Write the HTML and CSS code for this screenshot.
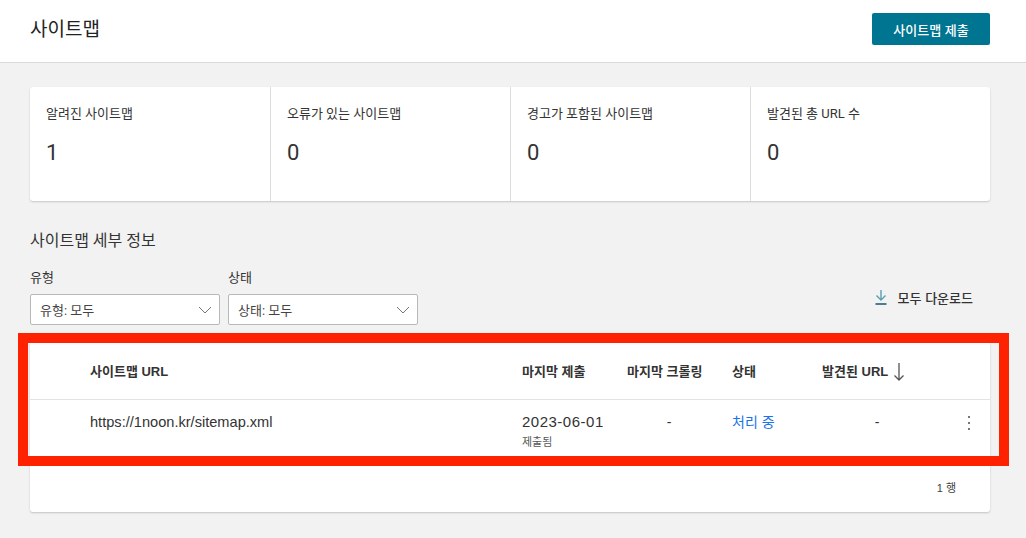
FILE: index.html
```html
<!DOCTYPE html>
<html lang="ko">
<head>
<meta charset="utf-8">
<title>사이트맵</title>
<link rel="stylesheet" href="styles.css">
</head>
<body>
<header class="topbar">
  <h1 class="page-title">사이트맵</h1>
  <button class="btn-primary">사이트맵 제출</button>
</header>

<main class="content">
  <section class="summary">
    <div class="stat"><div class="stat-label">알려진 사이트맵</div><div class="stat-value">1</div></div>
    <div class="stat"><div class="stat-label">오류가 있는 사이트맵</div><div class="stat-value">0</div></div>
    <div class="stat"><div class="stat-label">경고가 포함된 사이트맵</div><div class="stat-value">0</div></div>
    <div class="stat"><div class="stat-label">발견된 총 URL 수</div><div class="stat-value">0</div></div>
  </section>

  <h2 class="section-title">사이트맵 세부 정보</h2>

  <div class="filters">
    <div class="filter">
      <label class="filter-label">유형</label>
      <div class="select"><span>유형: 모두</span>
        <svg class="chev" width="14" height="8" viewBox="0 0 14 8"><path d="M1 1l6 6 6-6" fill="none" stroke="#757575" stroke-width="1"/></svg>
      </div>
    </div>
    <div class="filter">
      <label class="filter-label">상태</label>
      <div class="select"><span>상태: 모두</span>
        <svg class="chev" width="14" height="8" viewBox="0 0 14 8"><path d="M1 1l6 6 6-6" fill="none" stroke="#757575" stroke-width="1"/></svg>
      </div>
    </div>
    <div class="download">
      <svg width="12" height="16" viewBox="0 0 12 16"><path d="M6 1v10M1.5 6.5L6 11l4.5-4.5" fill="none" stroke="#5a9fb3" stroke-width="1.4"/><path d="M0.5 15h11" stroke="#1f5f73" stroke-width="1.6"/></svg>
      <span>모두 다운로드</span>
    </div>
  </div>

  <section class="table-card">
    <div class="trow thead">
      <div>사이트맵 URL</div>
      <div>마지막 제출</div>
      <div>마지막 크롤링</div>
      <div>상태</div>
      <div class="sorted">발견된 URL
        <svg class="arrow" width="12" height="20" viewBox="0 0 12 20"><path d="M6 1v17M1.5 13.5L6 18l4.5-4.5" fill="none" stroke="#555" stroke-width="1.3"/></svg>
      </div>
      <div></div>
    </div>
    <div class="trow tbody">
      <div class="url">https://1noon.kr/sitemap.xml</div>
      <div class="date">2023-06-01<small>제출됨</small></div>
      <div class="center c3">-</div>
      <div class="status">처리 중</div>
      <div class="center">-</div>
      <div class="kebab"><i></i><i></i><i></i></div>
    </div>
    <div class="tfoot">1 행</div>
  </section>
</main>

<div class="highlight"></div>
</body>
</html>
```

FILE: styles.css
```css
* { box-sizing: border-box; }
html, body { margin: 0; padding: 0; }
body {
  background: #f2f2f2;
  font-family: Roboto, "Noto Sans CJK KR", sans-serif;
  color: #333;
  width: 1026px;
  height: 538px;
  overflow: hidden;
  position: relative;
}
.topbar {
  height: 63px;
  background: #fff;
  border-bottom: 1px solid #dadada;
  display: flex;
  align-items: center;
  justify-content: space-between;
  padding: 0 36px 0 30px;
}
.page-title {
  margin: 0 0 8px 0;
  font-weight: 400;
  font-size: 19px;
  color: #222;
}
.btn-primary {
  background: #007591;
  color: #fff;
  border: none;
  border-radius: 2px;
  width: 118px;
  height: 32px;
  font-family: "Noto Sans CJK KR", sans-serif;
  font-size: 13px;
  font-weight: 500;
  margin-top: -4px;
  padding: 0;
}
.content { padding: 24px 36px 0 30px; }
.summary {
  background: #fff;
  border-radius: 3px;
  box-shadow: 0 1px 2px rgba(0,0,0,0.18);
  display: grid;
  grid-template-columns: repeat(4, 1fr);
  height: 114px;
}
.stat { padding: 18px 16px; border-left: 1px solid #ddd; }
.stat:first-child { border-left: none; }
.stat-label { font-size: 13px; line-height: 18px; color: #333; }
.stat-value { font-size: 22px; line-height: 28px; margin-top: 16px; color: #333; }
.section-title {
  font-size: 16px;
  font-weight: 400;
  line-height: 22px;
  margin: 29px 0 0 0;
  color: #333;
}
.filters { display: flex; align-items: center; margin-top: 17px; gap: 8px; }
.filter { display: flex; flex-direction: column; }
.filter-label { font-size: 13px; line-height: 18px; margin-bottom: 7px; color: #333; }
.select {
  width: 190px;
  height: 31px;
  border: 1px solid #b8b8b8;
  border-radius: 2px;
  background: #fff;
  display: flex;
  align-items: center;
  justify-content: space-between;
  padding: 0 7px 0 9px;
  font-size: 13px;
  color: #444;
}
.download {
  margin-left: auto;
  margin-right: 17px;
  display: flex;
  align-items: center;
  gap: 11px;
  font-family: "Noto Sans CJK KR", sans-serif;
  font-size: 13px;
  font-weight: 500;
  color: #333;
}
.table-card {
  margin-top: 17px;
  background: #fff;
  border-radius: 3px;
  box-shadow: 0 1px 2px rgba(0,0,0,0.2);
  font-family: "Liberation Sans", "Noto Sans CJK KR", sans-serif;
  height: 170px;
}
.trow {
  display: grid;
  grid-template-columns: 432px 105px 105px 90px 110px 1fr;
  padding-left: 60px;
}
.thead {
  height: 58px;
  align-items: center;
  border-bottom: 1px solid #e3e3e3;
  font-size: 13px;
  font-weight: 700;
  color: #333;
}
.sorted { display: flex; align-items: center; }
.thead .arrow { margin-left: 5px; margin-top: 2px; }
.tbody {
  height: 56px;
  padding-top: 12px;
  font-size: 14px;
  color: #333;
  line-height: 20px;
}
.url { font-size: 14.6px; }
.date { font-size: 15px; letter-spacing: 0.5px; }
.date small { display: block; font-size: 11px; color: #555; line-height: 20px; letter-spacing: 0; }
.center { text-align: center; }
.c3 { padding-right: 21px; }
.status { color: #1a73e8; }
.kebab {
  justify-self: end;
  margin-right: 20px;
  display: flex;
  flex-direction: column;
  gap: 4px;
  padding-top: 4px;
}
.kebab i { display: block; width: 2px; height: 2px; background: #777; }
.tfoot {
  text-align: right;
  padding: 23px 34px 0 0;
  font-size: 11px;
  color: #444;
}
.highlight {
  position: absolute;
  left: 18px;
  top: 333px;
  width: 991px;
  height: 133px;
  border: 10px solid #ff2200;
  pointer-events: none;
}
```
